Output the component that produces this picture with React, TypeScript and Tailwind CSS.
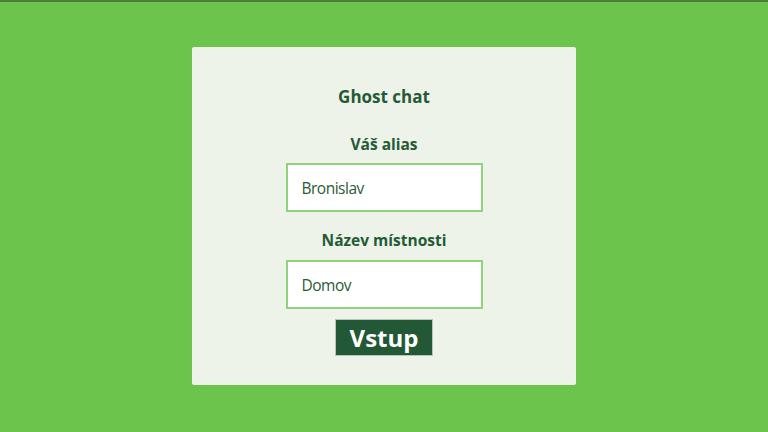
import React from "react"

const App: React.FC = () => (
  <div className="flex h-[432px] w-[768px] justify-center border-t-2 border-[#4f7d3c] bg-[#6cc44c] pt-[45px] font-['Open_Sans',sans-serif]">
    <div className="flex h-[338px] w-[384px] flex-col items-center rounded-[2px] bg-[#edf3e8] pt-[38px]">
      <h1 className="text-[17px] font-bold leading-6 text-[#245a36]">Ghost chat</h1>

      <label className="mt-[23px] text-[15.5px] font-bold leading-6 text-[#245a36]">Váš alias</label>
      <input
        defaultValue="Bronislav"
        className="mt-[7px] h-[49px] w-[197px] border-2 border-[#8fd47a] bg-white pl-[14px] text-[15.5px] tracking-[-0.5px] text-[#2b5a36] outline-none"
      />

      <label className="mt-[16px] text-[15.5px] font-bold leading-6 text-[#245a36]">Název místnosti</label>
      <input
        defaultValue="Domov"
        className="mt-[8px] h-[49px] w-[197px] border-2 border-[#8fd47a] bg-white pl-[14px] text-[15.5px] tracking-[-0.5px] text-[#2b5a36] outline-none"
      />

      <button className="mt-[10px] h-[37px] w-[98px] border border-[#b9c4b4] bg-[#225836] text-[24px] font-bold leading-none text-white">
        Vstup
      </button>
    </div>
  </div>
)

export default App
